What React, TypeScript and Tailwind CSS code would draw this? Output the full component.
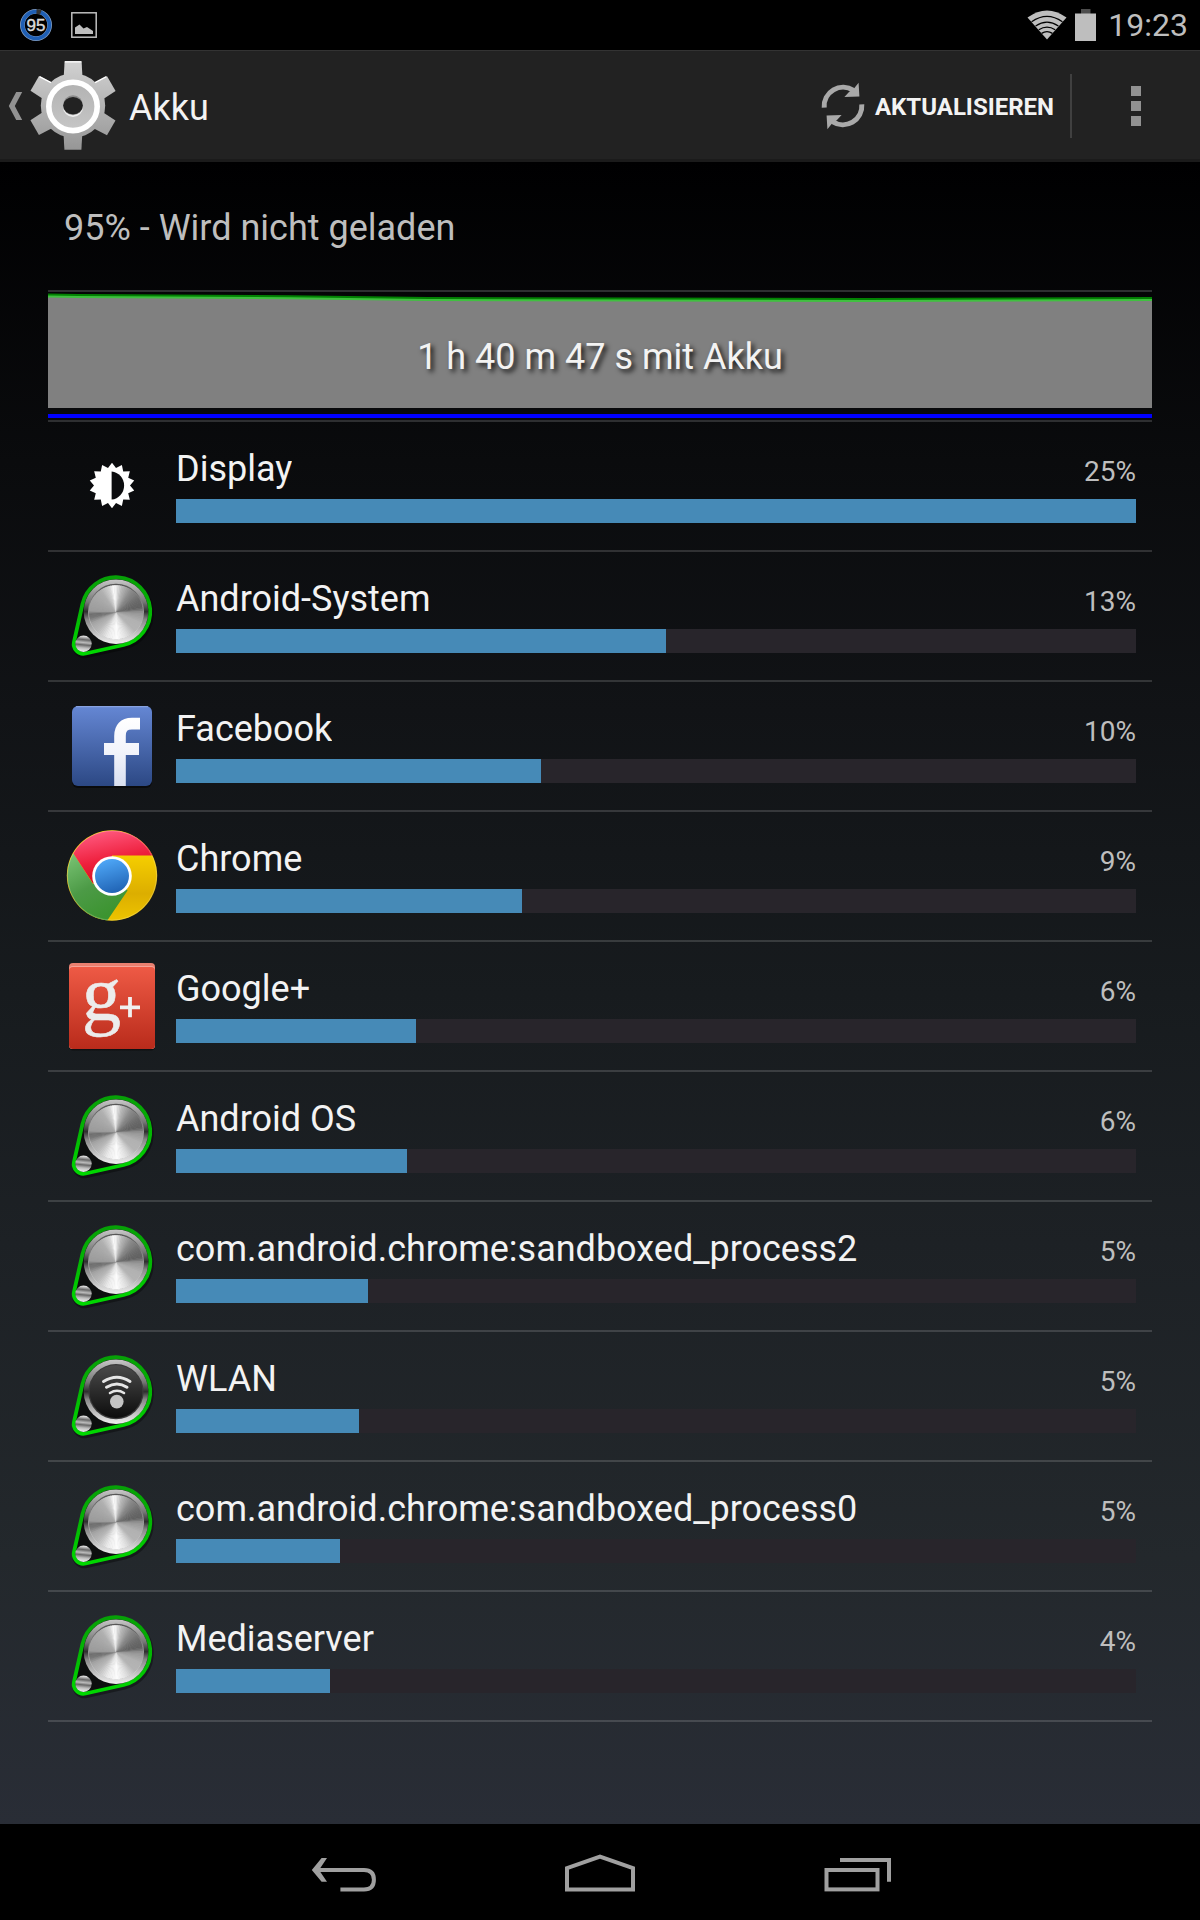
import React from "react";

type IconKind = "display" | "dial" | "facebook" | "chrome" | "gplus" | "wlan";

interface Consumer {
  name: string;
  percent: number;
  bar: number;
  icon: IconKind;
}

const consumers: Consumer[] = [
  { name: "Display", percent: 25, bar: 100, icon: "display" },
  { name: "Android-System", percent: 13, bar: 51, icon: "dial" },
  { name: "Facebook", percent: 10, bar: 38, icon: "facebook" },
  { name: "Chrome", percent: 9, bar: 36, icon: "chrome" },
  { name: "Google+", percent: 6, bar: 25, icon: "gplus" },
  { name: "Android OS", percent: 6, bar: 24.1, icon: "dial" },
  { name: "com.android.chrome:sandboxed_process2", percent: 5, bar: 20, icon: "dial" },
  { name: "WLAN", percent: 5, bar: 19.1, icon: "wlan" },
  { name: "com.android.chrome:sandboxed_process0", percent: 5, bar: 17.1, icon: "dial" },
  { name: "Mediaserver", percent: 4, bar: 16, icon: "dial" },
];

const rad = (deg: number) => ((deg - 90) * Math.PI) / 180;

function polar(cx: number, cy: number, r: number, deg: number) {
  return `${(cx + r * Math.cos(rad(deg))).toFixed(2)} ${(cy + r * Math.sin(rad(deg))).toFixed(2)}`;
}

/* Brightness of the brushed metal by angle, clockwise from the top. */
const metalStops: [number, number][] = [
  [0, 235],
  [14, 185],
  [35, 140],
  [60, 108],
  [80, 96],
  [92, 150],
  [115, 178],
  [135, 180],
  [155, 220],
  [178, 252],
  [200, 235],
  [225, 185],
  [245, 165],
  [258, 120],
  [266, 110],
  [274, 155],
  [300, 165],
  [325, 175],
  [345, 210],
  [355, 252],
  [360, 235],
];

function metalAt(deg: number) {
  for (let i = 1; i < metalStops.length; i++) {
    const [a0, v0] = metalStops[i - 1];
    const [a1, v1] = metalStops[i];
    if (deg <= a1) return Math.round(v0 + ((v1 - v0) * (deg - a0)) / (a1 - a0));
  }
  return 235;
}

function BrushedDisc({ cx, cy, r }: { cx: number; cy: number; r: number }) {
  const step = 4;
  return (
    <g>
      <circle cx={cx} cy={cy} r={r} fill="#aaa" />
      {Array.from({ length: 360 / step }, (_, i) => {
        const a = i * step;
        const v = metalAt(a + step / 2);
        return (
          <path
            key={a}
            d={`M${cx} ${cy} L${polar(cx, cy, r, a - 0.6)} A${r} ${r} 0 0 1 ${polar(cx, cy, r, a + step + 0.6)} Z`}
            fill={`rgb(${v},${v},${v})`}
          />
        );
      })}
    </g>
  );
}

function DialIcon({ wifi = false }: { wifi?: boolean }) {
  const id = React.useId();
  const belt = "M18.5 36 A34.3 34.3 0 1 1 59.5 77 L21.6 85.5 A9.7 9.7 0 0 1 10 73.9 Z";
  return (
    <svg viewBox="0 0 96 96" className="size-24 shrink-0" aria-hidden="true">
      <defs>
        <linearGradient id={id + "g"} x1="0" y1="0" x2="0" y2="1">
          <stop offset="0" stopColor="#06a006" />
          <stop offset="0.55" stopColor="#02bb02" />
          <stop offset="1" stopColor="#00d800" />
        </linearGradient>
        <linearGradient id={id + "r"} x1="0" y1="0" x2="0" y2="1">
          <stop offset="0" stopColor="#c8c8c8" />
          <stop offset="0.35" stopColor="#777" />
          <stop offset="0.5" stopColor="#2e2e2e" />
          <stop offset="0.62" stopColor="#888" />
          <stop offset="1" stopColor="#f0f0f0" />
        </linearGradient>
        <linearGradient id={id + "k"} x1="0" y1="0" x2="0" y2="1">
          <stop offset="0" stopColor="#4a4a4a" />
          <stop offset="1" stopColor="#0c0c0c" />
        </linearGradient>
        <linearGradient id={id + "h"} x1="0" y1="0" x2="0" y2="1">
          <stop offset="0" stopColor="#555" />
          <stop offset="0.5" stopColor="#999" />
          <stop offset="1" stopColor="#e8e8e8" />
        </linearGradient>
        <linearGradient id={id + "s"} x1="0.1" y1="0" x2="0" y2="1">
          <stop offset="0" stopColor="#ddd" />
          <stop offset="0.2" stopColor="#666" />
          <stop offset="0.38" stopColor="#bbb" />
          <stop offset="0.52" stopColor="#6a6a6a" />
          <stop offset="0.7" stopColor="#bbb" />
          <stop offset="1" stopColor="#fff" />
        </linearGradient>
      </defs>
      <path d={belt} transform="translate(1 2)" fill="#000" opacity="0.35" stroke="#000" strokeWidth="5" />
      <path d={belt} fill="#0c0e0e" stroke={`url(#${id}g)`} strokeWidth="3.8" />
      <circle cx="52" cy="43.7" r="32.3" fill={`url(#${id}r)`} />
      {wifi ? (
        <>
          <circle cx="52" cy="43.7" r="27.6" fill="#3a3a3a" />
          <circle cx="52" cy="43.7" r="26.4" fill={`url(#${id}k)`} />
          <g fill="none" stroke="#e6e6e6" strokeLinecap="round" strokeWidth="3">
            <path d="M39.5 33.5 Q53 25 66 33.5" />
            <path d="M42.5 39.2 Q53 32.6 63 39.2" />
            <path d="M46 45 Q53 40.6 60 45" strokeWidth="2.6" />
          </g>
          <circle cx="52.8" cy="53.6" r="6.8" fill="#c4c4c4" />
        </>
      ) : (
        <>
          <circle cx="52" cy="43.7" r="28" fill={`url(#${id}h)`} />
          <BrushedDisc cx={52} cy={44.2} r={27} />
        </>
      )}
      <circle cx="19.5" cy="75.8" r="8.2" fill={`url(#${id}s)`} />
    </svg>
  );
}

function DisplayIcon() {
  const n = 14;
  const pts = Array.from({ length: n * 2 }, (_, i) =>
    polar(48, 47.5, i % 2 ? 18 : 22.8, (i * 180) / n).replace(" ", ",")
  ).join(" ");
  return (
    <svg viewBox="0 0 96 96" className="size-24 shrink-0" aria-hidden="true">
      <polygon points={pts} fill="#fff" />
      <path d="M47.6 33.4 A14.2 14.2 0 0 1 47.6 61.6 Z" fill="#0b0c0e" />
    </svg>
  );
}

function FacebookIcon() {
  return (
    <svg viewBox="0 0 96 96" className="size-24 shrink-0" aria-hidden="true">
      <defs>
        <linearGradient id="fb-bg" x1="0" y1="0" x2="0" y2="1">
          <stop offset="0" stopColor="#6587d4" />
          <stop offset="1" stopColor="#2c4884" />
        </linearGradient>
        <linearGradient id="fb-f" gradientUnits="userSpaceOnUse" x1="0" y1="20" x2="0" y2="88">
          <stop offset="0" stopColor="#fff" />
          <stop offset="0.5" stopColor="#f2f4fb" />
          <stop offset="1" stopColor="#d9dff0" />
        </linearGradient>
      </defs>
      <rect x="8" y="10" width="80" height="80" rx="6" fill="#000" opacity="0.5" />
      <rect x="8" y="8" width="80" height="80" rx="6" fill="url(#fb-bg)" />
      <path d="M12 8.7 H84" stroke="#8fa9e4" strokeWidth="1" />
      <g fill="none" stroke="url(#fb-f)">
        <path d="M56 88 V38 Q56 25.6 68 25.6 H76" strokeWidth="11.6" />
        <path d="M40 51 H57 V51.1 H75" strokeWidth="12" />
      </g>
    </svg>
  );
}

function ChromeIcon() {
  return (
    <svg viewBox="0 0 96 96" className="size-24 shrink-0" aria-hidden="true">
      <defs>
        <linearGradient id="ch-r" x1="0.3" y1="0" x2="0.6" y2="1">
          <stop offset="0" stopColor="#ff5a80" />
          <stop offset="0.55" stopColor="#ee1f3c" />
          <stop offset="1" stopColor="#cf0a1c" />
        </linearGradient>
        <linearGradient id="ch-g" x1="0" y1="0" x2="0.5" y2="1">
          <stop offset="0" stopColor="#7cc576" />
          <stop offset="0.55" stopColor="#4c9a46" />
          <stop offset="1" stopColor="#3c9430" />
        </linearGradient>
        <linearGradient id="ch-y" x1="0" y1="0" x2="0" y2="1">
          <stop offset="0.25" stopColor="#f7d000" />
          <stop offset="0.7" stopColor="#dcae00" />
          <stop offset="1" stopColor="#eec400" />
        </linearGradient>
        <linearGradient id="ch-b" x1="0.3" y1="0" x2="0.6" y2="1">
          <stop offset="0" stopColor="#4fa8f8" />
          <stop offset="1" stopColor="#2063b4" />
        </linearGradient>
      </defs>
      <circle cx="48" cy="47.5" r="45.2" fill="url(#ch-y)" />
      <path d="M9.3 25.3 L29 56 L48 47.6 L63.6 62.6 L43.3 92.5 A45.2 45.2 0 0 1 9.3 25.3 Z" fill="url(#ch-g)" />
      <path d="M9.3 25.3 A45.2 45.2 0 0 1 88.7 27.4 H48 V47.6 L29 55.5 Z" fill="url(#ch-r)" />
      <circle cx="48" cy="47.5" r="44.6" fill="none" stroke="#fff" strokeOpacity="0.2" strokeWidth="1" />
      <circle cx="48" cy="48" r="19.8" fill="#fff" />
      <circle cx="48" cy="48" r="17" fill="url(#ch-b)" />
    </svg>
  );
}

function GooglePlusIcon() {
  return (
    <svg viewBox="0 0 96 96" className="size-24 shrink-0 overflow-visible" aria-hidden="true">
      <defs>
        <linearGradient id="gp-bg" x1="0" y1="0" x2="0" y2="1">
          <stop offset="0" stopColor="#ee5a45" />
          <stop offset="1" stopColor="#b92b1b" />
        </linearGradient>
      </defs>
      <rect x="5" y="6.5" width="86" height="86" rx="4" fill="#000" opacity="0.4" />
      <rect x="5" y="5" width="86" height="86" rx="4" fill="#e98070" />
      <rect x="5" y="8" width="86" height="83" rx="4" fill="#f3a398" />
      <rect x="5" y="9" width="86" height="82" rx="4" fill="url(#gp-bg)" />
      <text x="18" y="62" fontFamily="Liberation Serif" fontSize="78" fill="#ececec" stroke="#ececec" strokeWidth="0.6">
        g
      </text>
      <path d="M56 49.3 H76 M66 39 V59.3" stroke="#f0f0f0" strokeWidth="3.8" />
    </svg>
  );
}

function ConsumerIcon({ kind }: { kind: IconKind }) {
  switch (kind) {
    case "display":
      return <DisplayIcon />;
    case "facebook":
      return <FacebookIcon />;
    case "chrome":
      return <ChromeIcon />;
    case "gplus":
      return <GooglePlusIcon />;
    case "wlan":
      return <DialIcon wifi />;
    default:
      return <DialIcon />;
  }
}

function SettingsGear() {
  const tooth = "M38.8 18 L39.6 3.4 H56.6 L57.4 18 Z";
  return (
    <svg viewBox="0 0 96 96" className="size-24 shrink-0" aria-hidden="true">
      <defs>
        <linearGradient id="gear" gradientUnits="userSpaceOnUse" x1="0" y1="3" x2="0" y2="92">
          <stop offset="0" stopColor="#d2d2d2" />
          <stop offset="1" stopColor="#969696" />
        </linearGradient>
        <linearGradient id="gear-in" x1="0" y1="0" x2="0" y2="1">
          <stop offset="0" stopColor="#b2b2b2" />
          <stop offset="1" stopColor="#c6c6c6" />
        </linearGradient>
        <mask id="gear-shape">
          {[0, 60, 120, 180, 240, 300].map((a) => (
            <path key={a} d={tooth} transform={`rotate(${a} 48 47.6)`} fill="#fff" />
          ))}
          <circle cx="48" cy="47.6" r="32.2" fill="#fff" />
        </mask>
      </defs>
      <rect width="96" height="96" fill="url(#gear)" mask="url(#gear-shape)" />
      <g stroke="#fff" strokeWidth="1.4">
        <path d="M39.8 3.8 H56.4" />
        <path d="M14.6 18.6 L26 24.6" />
        <path d="M70 24.6 L81.4 18.6" />
      </g>
      <circle cx="48" cy="48.4" r="24.2" fill="url(#gear-in)" stroke="#fff" strokeWidth="5.6" />
      <circle cx="48" cy="49" r="10" fill="#eee" />
      <circle cx="48" cy="47.2" r="10" fill="#8a8a8a" />
      <ellipse cx="48" cy="47.6" rx="9.8" ry="8.6" fill="#222" />
    </svg>
  );
}

function StatusBar() {
  return (
    <div className="flex h-[50px] items-center bg-black px-3 pl-5 text-[#bebebe]">
      <svg viewBox="0 0 32 32" className="size-8" role="img" aria-label="Akkustand 95">
        <circle cx="16" cy="16" r="13.6" fill="none" stroke="#7f9cc4" strokeWidth="4.8" />
        <circle cx="16" cy="16" r="13.4" fill="none" stroke="#1f5fb4" strokeWidth="3.6" />
        <path d="M16.5 2.6 A13.4 13.4 0 0 1 20.8 3.5" fill="none" stroke="#333" strokeWidth="5" />
        <text x="16" y="22" textAnchor="middle" fontFamily="Liberation Sans" fontSize="17" fill="#dcdcdc" stroke="#dcdcdc" strokeWidth="0.4">
          95
        </text>
      </svg>
      <svg viewBox="0 0 26 26" className="ml-[19px] size-[26px]" aria-hidden="true">
        <rect x="0.8" y="0.8" width="24.4" height="24.4" fill="none" stroke="#bebebe" strokeWidth="1.5" />
        <path d="M4 22 V15.5 L8.5 12.5 L12.5 16.5 L16 15 L22 19 V22 Z" fill="#bebebe" />
      </svg>
      <div className="ml-auto flex items-center">
        <svg viewBox="0 0 40 30" className="h-[30px] w-10" aria-hidden="true">
          <path d="M0.5 7.5 Q20 -6.5 39.5 7.5 L20 29.5 Z" fill="#bebebe" />
          <g fill="none" stroke="#000" strokeWidth="1.3">
            <path d="M4.6 11.8 Q20 1 35.4 11.8" />
            <path d="M8.6 16 Q20 8.4 31.4 16" />
            <path d="M11.8 19.8 Q20 14.6 28.2 19.8" />
            <path d="M14.6 23.4 Q20 19.8 25.4 23.4" />
          </g>
        </svg>
        <svg viewBox="0 0 21 32" className="ml-2 h-8 w-[21px]" aria-hidden="true">
          <rect x="6" y="0" width="9.5" height="5" fill="#4d4d4d" />
          <rect x="0" y="4.5" width="21" height="27.5" fill="#bebebe" />
        </svg>
        <time className="ml-3 text-[32px] leading-[50px]">19:23</time>
      </div>
    </div>
  );
}

function ActionBar() {
  return (
    <header className="flex h-28 items-center border-t border-b-[3px] border-t-[#333] border-b-[#1b1b1b] bg-[#222] pt-0.5 text-[#f3f3f3]">
      <button type="button" aria-label="Nach oben" className="flex items-center pl-2">
        <svg viewBox="0 0 17 30" className="h-[30px] w-[17px]" aria-hidden="true">
          <path d="M14.2 1 H8.2 L0.8 15 L8.2 29 H14.2 L6.8 15 Z" fill="#929292" />
        </svg>
        <SettingsGear />
      </button>
      <h1 className="ml-2 pt-1 text-4xl font-normal">Akku</h1>
      <button type="button" className="ml-auto flex h-16 items-center border-r-2 border-[#404040] pr-4">
        <svg viewBox="0 0 48 48" className="size-12" aria-hidden="true">
          <g id="arrow-half">
            <path d="M5.2 25.6 A18.9 18.9 0 0 1 34.5 8.4" fill="none" stroke="#a9a9a9" strokeWidth="5" />
            <path d="M39.6 0.8 L40.4 14.6 L25.4 14.9 L30 10 L35 6.6 Z" fill="#a9a9a9" />
          </g>
          <use href="#arrow-half" transform="rotate(180 24 24)" />
        </svg>
        <span className="ml-2 pt-0.5 text-2xl leading-8 font-bold">AKTUALISIEREN</span>
      </button>
      <button type="button" aria-label="Weitere Optionen" className="flex h-full w-32 flex-col items-center justify-center gap-[5px]">
        <span className="size-2.5 bg-[#929292]" />
        <span className="size-2.5 bg-[#929292]" />
        <span className="size-2.5 bg-[#929292]" />
      </button>
    </header>
  );
}

function BatteryChart() {
  const level = "0,3.5 30,4 240,5.2 380,7 820,7.9 1104,7";
  return (
    <section className="grid h-[132px] border-y-2 border-[#2e2f31]" aria-label="Akkuverlauf">
      <svg viewBox="0 0 1104 128" preserveAspectRatio="none" className="col-start-1 row-start-1 h-full w-full" aria-hidden="true">
        <polygon points={`${level} 1104,116 0,116`} fill="#808080" />
        <polyline points={level} fill="none" stroke="#00ff00" strokeOpacity="0.5" strokeWidth="4" />
        <rect x="0" y="122" width="1104" height="4" fill="#0000ff" />
      </svg>
      <p className="col-start-1 row-start-1 self-center pt-0.5 text-center text-4xl text-[#f3f3f3] [text-shadow:3px_3px_5px_rgba(0,0,0,0.85)]">
        1 h 40 m 47 s mit Akku
      </p>
    </section>
  );
}

function ConsumerRow({ item }: { item: Consumer }) {
  return (
    <li className="flex items-center gap-4 border-b-2 border-white/15 px-4">
      <ConsumerIcon kind={item.icon} />
      <div className="min-w-0 grow pt-[23px] pb-[27px]">
        <div className="flex h-12 items-baseline justify-between">
          <span className="truncate text-4xl leading-[48px] text-[#f3f3f3]">{item.name}</span>
          <span className="text-[28px] leading-8 text-[#bebebe]">{item.percent}%</span>
        </div>
        <div
          role="meter"
          aria-label={item.name}
          aria-valuemin={0}
          aria-valuemax={100}
          aria-valuenow={item.percent}
          className="mt-1.5 h-6 bg-[#28252b]"
        >
          <div className="h-full bg-[#468ab7]" style={{ width: `${item.bar}%` }} />
        </div>
      </div>
    </li>
  );
}

function NavigationBar() {
  return (
    <nav className="flex h-24 justify-center bg-black" aria-label="Systemnavigation">
      <button type="button" aria-label="Zurück" className="flex w-64 items-center justify-center">
        <svg viewBox="0 0 66 44" className="h-11 w-[66px]" fill="none" stroke="#a0a0a0" strokeWidth="4" aria-hidden="true">
          <path d="M5 20 H53 Q62.9 20 62.9 29.7 Q62.9 39.4 53 39.4 H29.4" />
          <path d="M10.6 8 H16 L8 20 L16 31.7 H10.6 L0.8 20 Z" fill="#a0a0a0" stroke="none" />
        </svg>
      </button>
      <button type="button" aria-label="Startseite" className="flex w-64 items-center justify-center">
        <svg viewBox="0 0 72 44" className="h-11 w-[72px]" fill="none" stroke="#a0a0a0" strokeWidth="4" aria-hidden="true">
          <path d="M3 39.4 V18.2 L36 6.5 L69 18.2 V39.4 Z" />
        </svg>
      </button>
      <button type="button" aria-label="Letzte Apps" className="flex w-64 items-center justify-center">
        <svg viewBox="0 0 72 44" className="h-11 w-[72px]" fill="none" stroke="#a0a0a0" strokeWidth="4" aria-hidden="true">
          <rect x="6.5" y="20" width="51" height="19.4" />
          <path d="M20 10 H69 V31.7" />
        </svg>
      </button>
    </nav>
  );
}

export default function App() {
  return (
    <div className="flex min-h-screen flex-col bg-black font-[Roboto,sans-serif]">
      <StatusBar />
      <ActionBar />
      <main className="grow bg-[linear-gradient(to_bottom,#000001,#0a0b0d_18%,#111316_33%,#171b1e_50%,#1d2125_65%,#23282c_84%,#292d36)] px-12">
        <p className="flex h-32 items-center px-4 pt-1 text-4xl text-[#bebebe]">95% - Wird nicht geladen</p>
        <BatteryChart />
        <ul>
          {consumers.map((item) => (
            <ConsumerRow key={item.name} item={item} />
          ))}
        </ul>
      </main>
      <NavigationBar />
    </div>
  );
}
